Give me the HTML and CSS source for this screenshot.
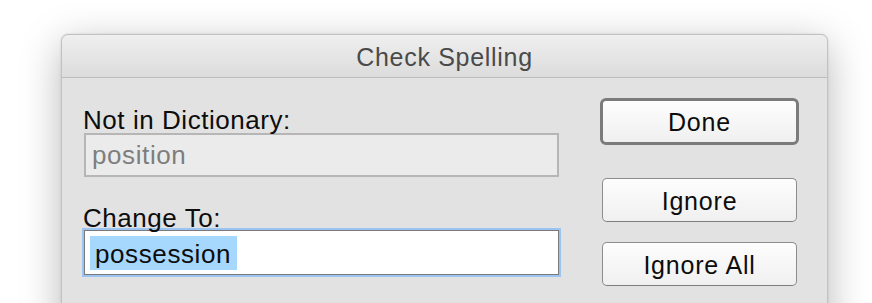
FILE: index.html
```html
<!DOCTYPE html>
<html>
<head>
<meta charset="utf-8">
<link rel="stylesheet" href="styles.css">
</head>
<body>
<div class="dialog">
  <div class="titlebar">Check Spelling</div>
  <div class="content">
    <div class="left">
      <div class="label">Not in Dictionary:</div>
      <div class="field disabled">position</div>
      <div class="label gap">Change To:</div>
      <div class="field focused"><span class="sel">possession</span></div>
      <div class="label gap2">Suggestions:</div>
    </div>
    <div class="right">
      <div class="btn default">Done</div>
      <div class="btn ignore">Ignore</div>
      <div class="btn ignore-all">Ignore All</div>
    </div>
  </div>
</div>
</body>
</html>
```
FILE: styles.css
```css
html, body {
  margin: 0;
  padding: 0;
  background: #ffffff;
  overflow: hidden;
  height: 303px;
}
body {
  font-family: "Liberation Sans", Arial, sans-serif;
  color: #111;
}
.dialog {
  margin-left: 61px;
  margin-top: 34px;
  width: 767px;
  height: 400px;
  box-sizing: border-box;
  border: 1px solid #c2c2c2;
  border-radius: 7px 7px 0 0;
  background: #e2e2e2;
  box-shadow: 0 10px 40px rgba(0,0,0,0.28), 0 0 2px rgba(0,0,0,0.15);
  overflow: hidden;
}
.titlebar {
  height: 43px;
  box-sizing: border-box;
  padding-top: 2px;
  line-height: 41px;
  text-align: center;
  font-size: 25px;
  letter-spacing: 0.7px;
  color: #4a4a4a;
  background: linear-gradient(#efefef, #dcdcdc);
  border-bottom: 1px solid #bdbdbd;
  border-radius: 6px 6px 0 0;
}
.content {
  display: flex;
  align-items: flex-start;
  padding: 20px 0 0 22px;
  gap: 41px;
}
.left {
  width: 475px;
  margin-top: 4px;
}
.label {
  box-sizing: border-box;
  font-size: 26px;
  line-height: 30px;
  letter-spacing: 0.55px;
  height: 31px;
  padding-top: 3px;
  margin-left: -1px;
  color: #0d0d0d;
}
.label.gap { margin-top: 23px; height: 30px; }
.label.gap2 { margin-top: 20px; }
.field {
  box-sizing: border-box;
  font-size: 26px;
  letter-spacing: 0.6px;
}
.field.disabled {
  height: 44px;
  border: 2px solid #b6b6b6;
  background: #ebebeb;
  color: #7e7e7e;
  line-height: 36px;
  padding: 2px 0 0 6px;
}
.field.focused {
  height: 45px;
  border: 1px solid #7a7a7a;
  background: #ffffff;
  box-shadow: 0 0 0 2px #9cc4f2;
  padding: 5px 0 0 5px;
  color: #0d0d0d;
}
.sel {
  display: inline-block;
  box-sizing: border-box;
  height: 34px;
  line-height: 30px;
  padding: 3px 6px 0 5px;
  background: #a6d7fc;
  vertical-align: top;
}
.right {
  width: 199px;
  display: flex;
  flex-direction: column;
}
.btn {
  box-sizing: border-box;
  text-align: center;
  font-size: 25px;
  letter-spacing: 0.8px;
  color: #0d0d0d;
  background: linear-gradient(#fdfdfd, #f0f0f0);
  padding-top: 2px;
}
.btn.default {
  height: 47px;
  border: 3px solid #7b7b7b;
  border-radius: 6px;
  line-height: 39px;
}
.btn.ignore, .btn.ignore-all {
  height: 44px;
  margin: 0 2px;
  border: 1px solid #8c8c8c;
  border-bottom-color: #7d7d7d;
  border-radius: 5px;
  line-height: 40px;
}
.btn.ignore { margin-top: 33px; }
.btn.ignore-all { margin-top: 20px; }
```
